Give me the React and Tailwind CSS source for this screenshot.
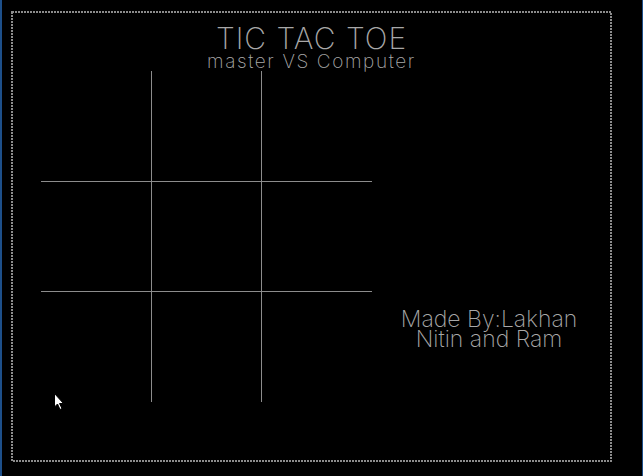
import React from 'react';

const GRAY = '#a8a8a8';

function DottedFrame() {
  return (
    <svg className="absolute inset-0 pointer-events-none" width="601" height="451" viewBox="0 0 601 451">
      <rect x="1" y="1" width="599" height="449" fill="none" stroke="#8c8c8c" strokeWidth="2" strokeDasharray="2 1" shapeRendering="crispEdges" />
    </svg>
  );
}

function Board() {
  return (
    <svg width="331" height="331" viewBox="0 0 331 331" className="block">
      <g stroke="#8c8c8c" strokeWidth="1" shapeRendering="crispEdges">
        <line x1="110.5" y1="0" x2="110.5" y2="331" />
        <line x1="220.5" y1="0" x2="220.5" y2="331" />
        <line x1="0" y1="110.5" x2="331" y2="110.5" />
        <line x1="0" y1="220.5" x2="331" y2="220.5" />
      </g>
    </svg>
  );
}

function Cursor() {
  return (
    <svg className="absolute left-[43px] top-[382px]" width="12" height="19" viewBox="0 0 12 19">
      <path d="M0.5 0.5 L0.5 14 L3.5 11 L6 16.5 L8 15.5 L5.5 10.5 L9.5 10.5 Z" fill="#fff" stroke="#000" strokeWidth="1" />
    </svg>
  );
}

export default function App() {
  return (
    <div className="w-[643px] h-[476px] bg-black overflow-hidden border-l-2 border-r border-[#1d4f8a] pl-[9px] pt-[11px]"
      style={{ fontFamily: 'Inter, "DejaVu Sans", sans-serif', WebkitFontSmoothing: 'antialiased' }}>
      <div className="relative w-[601px] h-[451px]">
        <DottedFrame />
        <div className="flex flex-col items-center pt-[14px]" style={{ color: GRAY }}>
          <h1 className="text-[30px] leading-[26px] font-extralight tracking-[1px] whitespace-nowrap">TIC TAC TOE</h1>
          <p className="text-[19px] leading-[20px] font-extralight tracking-[1.6px] mt-[1px] whitespace-nowrap">master VS Computer</p>
        </div>
        <div className="flex items-start pl-[30px] -mt-[1px]">
          <Board />
          <div className="flex flex-col items-center ml-[30px] mt-[238px] w-[174px] text-[23px] leading-[20px] font-extralight tracking-[0px] whitespace-nowrap" style={{ color: GRAY }}>
            <span>Made By:Lakhan</span>
            <span>Nitin and Ram</span>
          </div>
        </div>
        <Cursor />
      </div>
    </div>
  );
}
